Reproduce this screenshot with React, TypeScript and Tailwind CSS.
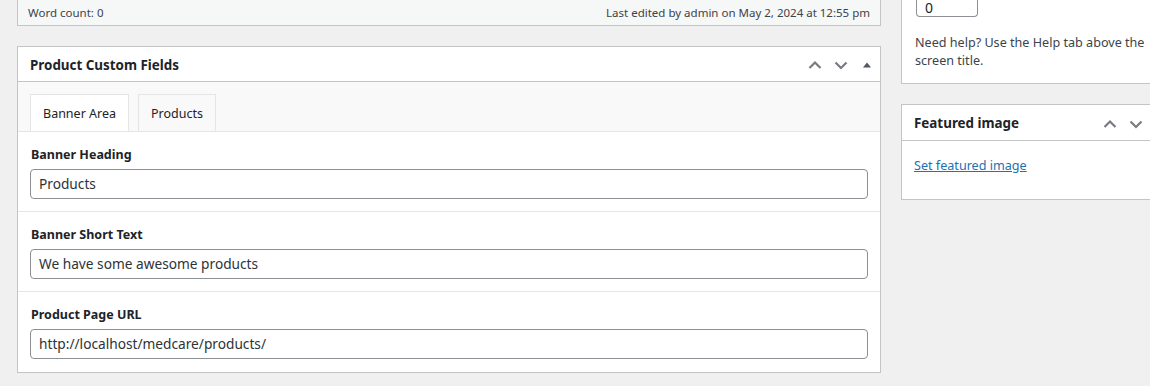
import React from 'react';

const FIELDS = [
  { id: 'banner_heading', label: 'Banner Heading', value: 'Products' },
  { id: 'banner_text', label: 'Banner Short Text', value: 'We have some awesome products' },
  { id: 'product_url', label: 'Product Page URL', value: 'http://localhost/medcare/products/' },
];

const ChevronUp = () => (
  <svg width="16" height="16" viewBox="0 0 16 16" fill="none" stroke="#787c82" strokeWidth="2.2">
    <path d="M2.5 11 L8 5.5 L13.5 11" />
  </svg>
);

const ChevronDown = () => (
  <svg width="16" height="16" viewBox="0 0 16 16" fill="none" stroke="#787c82" strokeWidth="2.2">
    <path d="M2.5 5.5 L8 11 L13.5 5.5" />
  </svg>
);

const TriangleUp = () => (
  <svg width="10" height="10" viewBox="0 0 10 10" fill="#50575e">
    <path d="M1 7.5 L5 2.5 L9 7.5 Z" />
  </svg>
);

const App: React.FC = () => {
  return (
    <div
      className="w-[1150px] h-[386px] overflow-hidden bg-[#f0f0f1] flex gap-[20px] pl-[17px] text-[#1d2327]"
      style={{ fontFamily: '"Noto Sans", "Open Sans", sans-serif' }}
    >
      {/* main column */}
      <div className="w-[864px] shrink-0 flex flex-col">
        <div className="h-[26px] border border-t-0 border-[#c3c4c7] bg-[#f6f7f7] flex items-center justify-between px-[10px] text-[11.5px] text-[#3c434a]">
          <span>Word count: 0</span>
          <span>Last edited by admin on May 2, 2024 at 12:55 pm</span>
        </div>

        <div className="mt-[20px] border border-[#c3c4c7] bg-white">
          <div className="h-[35px] border-b border-[#c3c4c7] flex items-center justify-between pl-[12px] pr-[5px] pt-[2px]">
            <h2 className="text-[13.4px] font-bold">Product Custom Fields</h2>
            <div className="flex items-center gap-[10px]">
              <ChevronUp />
              <ChevronDown />
              <span className="w-[16px] flex justify-center"><TriangleUp /></span>
            </div>
          </div>

          <div className="bg-[#f9f9f9] pt-[12px] pl-[12px] flex gap-[9px] border-b border-[#e5e5e5]">
            <div className="h-[37px] px-[12px] pt-[2px] flex items-center bg-white border border-b-0 border-[#e5e5e5] text-[12.5px] -mb-px">
              Banner Area
            </div>
            <div className="h-[37px] px-[12px] pt-[2px] flex items-center bg-[#f9f9f9] border border-b-0 border-[#e5e5e5] text-[12.5px]">
              Products
            </div>
          </div>

          {FIELDS.map((f, i) => (
            <div
              key={f.id}
              className={`h-[80px] px-[12px] pt-[14px] ${i < FIELDS.length - 1 ? 'border-b border-[#e5e5e5]' : 'h-[79px]'}`}
            >
              <label className="block text-[12.5px] font-bold leading-[18px] pl-px">{f.label}</label>
              <div className="mt-[5px] h-[30px] border border-[#8c8f94] rounded-[4px] flex items-center px-[8px] text-[13.7px] text-[#2c3338]">
                {f.value}
              </div>
            </div>
          ))}
        </div>
      </div>

      {/* sidebar */}
      <div className="w-[280px] shrink-0 flex flex-col">
        <div className="border border-t-0 border-[#c3c4c7] bg-white px-[13px] pb-[12px] h-[84px]">
          <div className="w-[62px] h-[17px] border border-t-0 border-[#8c8f94] rounded-b-[4px] ml-px flex items-end px-[8px] text-[14px] leading-[16px]">
            0
          </div>
          <p className="mt-[17px] max-w-[236px] text-[12.6px] leading-[18px] text-[#3c434a]">
            Need help? Use the Help tab above the screen title.
          </p>
        </div>

        <div className="mt-[20px] border border-[#c3c4c7] bg-white h-[96px]">
          <div className="h-[36px] border-b border-[#c3c4c7] flex items-center justify-between pl-[12px] pr-[10px] pt-[2px]">
            <h2 className="text-[13.4px] font-bold">Featured image</h2>
            <div className="flex items-center gap-[10px]">
              <ChevronUp />
              <ChevronDown />
              <span className="w-[16px]" />
            </div>
          </div>
          <div className="px-[12px] pt-[11px]">
            <a href="#" className="text-[12.6px] text-[#2271b1] underline">
              Set featured image
            </a>
          </div>
        </div>
      </div>
    </div>
  );
};

export default App;
